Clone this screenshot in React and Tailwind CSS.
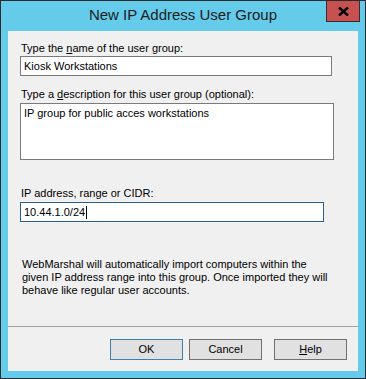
const font = { fontFamily: '"Liberation Sans", Arial, sans-serif' };

function Label({ children, className = '' }) {
  return <div className={`text-[11px] leading-[13px] text-black ${className}`}>{children}</div>;
}

function Button({ children, focused, className = '' }) {
  return (
    <div
      className={`flex h-[21px] w-[73px] items-center justify-center border bg-[#e1e1e1] text-[11px] text-black ${
        focused ? 'border-[#3c7fb1]' : 'border-[#707070]'
      } ${className}`}
    >
      {children}
    </div>
  );
}

export default function App() {
  return (
    <div style={font} className="relative flex h-[379px] w-[366px] flex-col border border-[#2b2b2b] bg-[#65cbea]">
      {/* title bar */}
      <div className="flex h-[30px] items-center justify-center pb-[1px] text-[15px] text-[#1b1b1b]">
        New IP Address User Group
      </div>
      <div className="absolute right-[5px] top-0 flex h-[21px] w-[34px] items-center justify-center border border-t-0 border-[#3d2a2a] bg-[#c75050]">
        <svg width="11" height="9" viewBox="0 0 11 9">
          <path d="M1 0.5 L10 8.5 M10 0.5 L1 8.5" stroke="#000" strokeWidth="2.4" />
        </svg>
      </div>

      {/* client area */}
      <div className="mx-[7px] mb-[7px] flex flex-1 flex-col bg-[#f0f0f0] pl-[13px]">
        <Label className="mt-[11px]">
          Type the <span className="underline">n</span>ame of the user group:
        </Label>
        <div className="ml-[-1px] mt-[1px] flex h-[20px] w-[312px] items-center border border-[#7a7a7a] bg-white pl-[3px] text-[11px]">
          Kiosk Workstations
        </div>

        <Label className="mt-[12px]">
          Type a <span className="underline">d</span>escription for this user group (optional):
        </Label>
        <div className="ml-[-1px] mt-[2px] h-[57px] w-[314px] border border-[#7a7a7a] bg-white pl-[3px] pt-[3px] text-[11px] leading-[13px]">
          IP group for public acces workstations
        </div>

        <Label className="mt-[27px]">IP address, range or CIDR:</Label>
        <div className="ml-[-1px] mt-[2px] flex h-[20px] w-[304px] items-center border border-[#2a5f91] bg-white pl-[3px] text-[11px]">
          10.44.1.0/24
          <span className="ml-[1px] inline-block h-[13px] w-[1px] bg-black" />
        </div>

        <div className="ml-[1px] mt-[36px] text-[11px] leading-[13px] text-black">
          WebMarshal will automatically import computers within the
          <br />
          given IP address range into this group. Once imported they will
          <br />
          behave like regular user accounts.
        </div>

        <div className="ml-[-13px] mt-[29px] h-[1px] bg-[#a0a0a0]" />

        <div className="ml-[89px] mt-[12px] flex">
          <Button focused>OK</Button>
          <Button className="ml-[6px]">Cancel</Button>
          <Button className="ml-[12px]">
            <span className="underline">H</span>elp
          </Button>
        </div>
      </div>
    </div>
  );
}
